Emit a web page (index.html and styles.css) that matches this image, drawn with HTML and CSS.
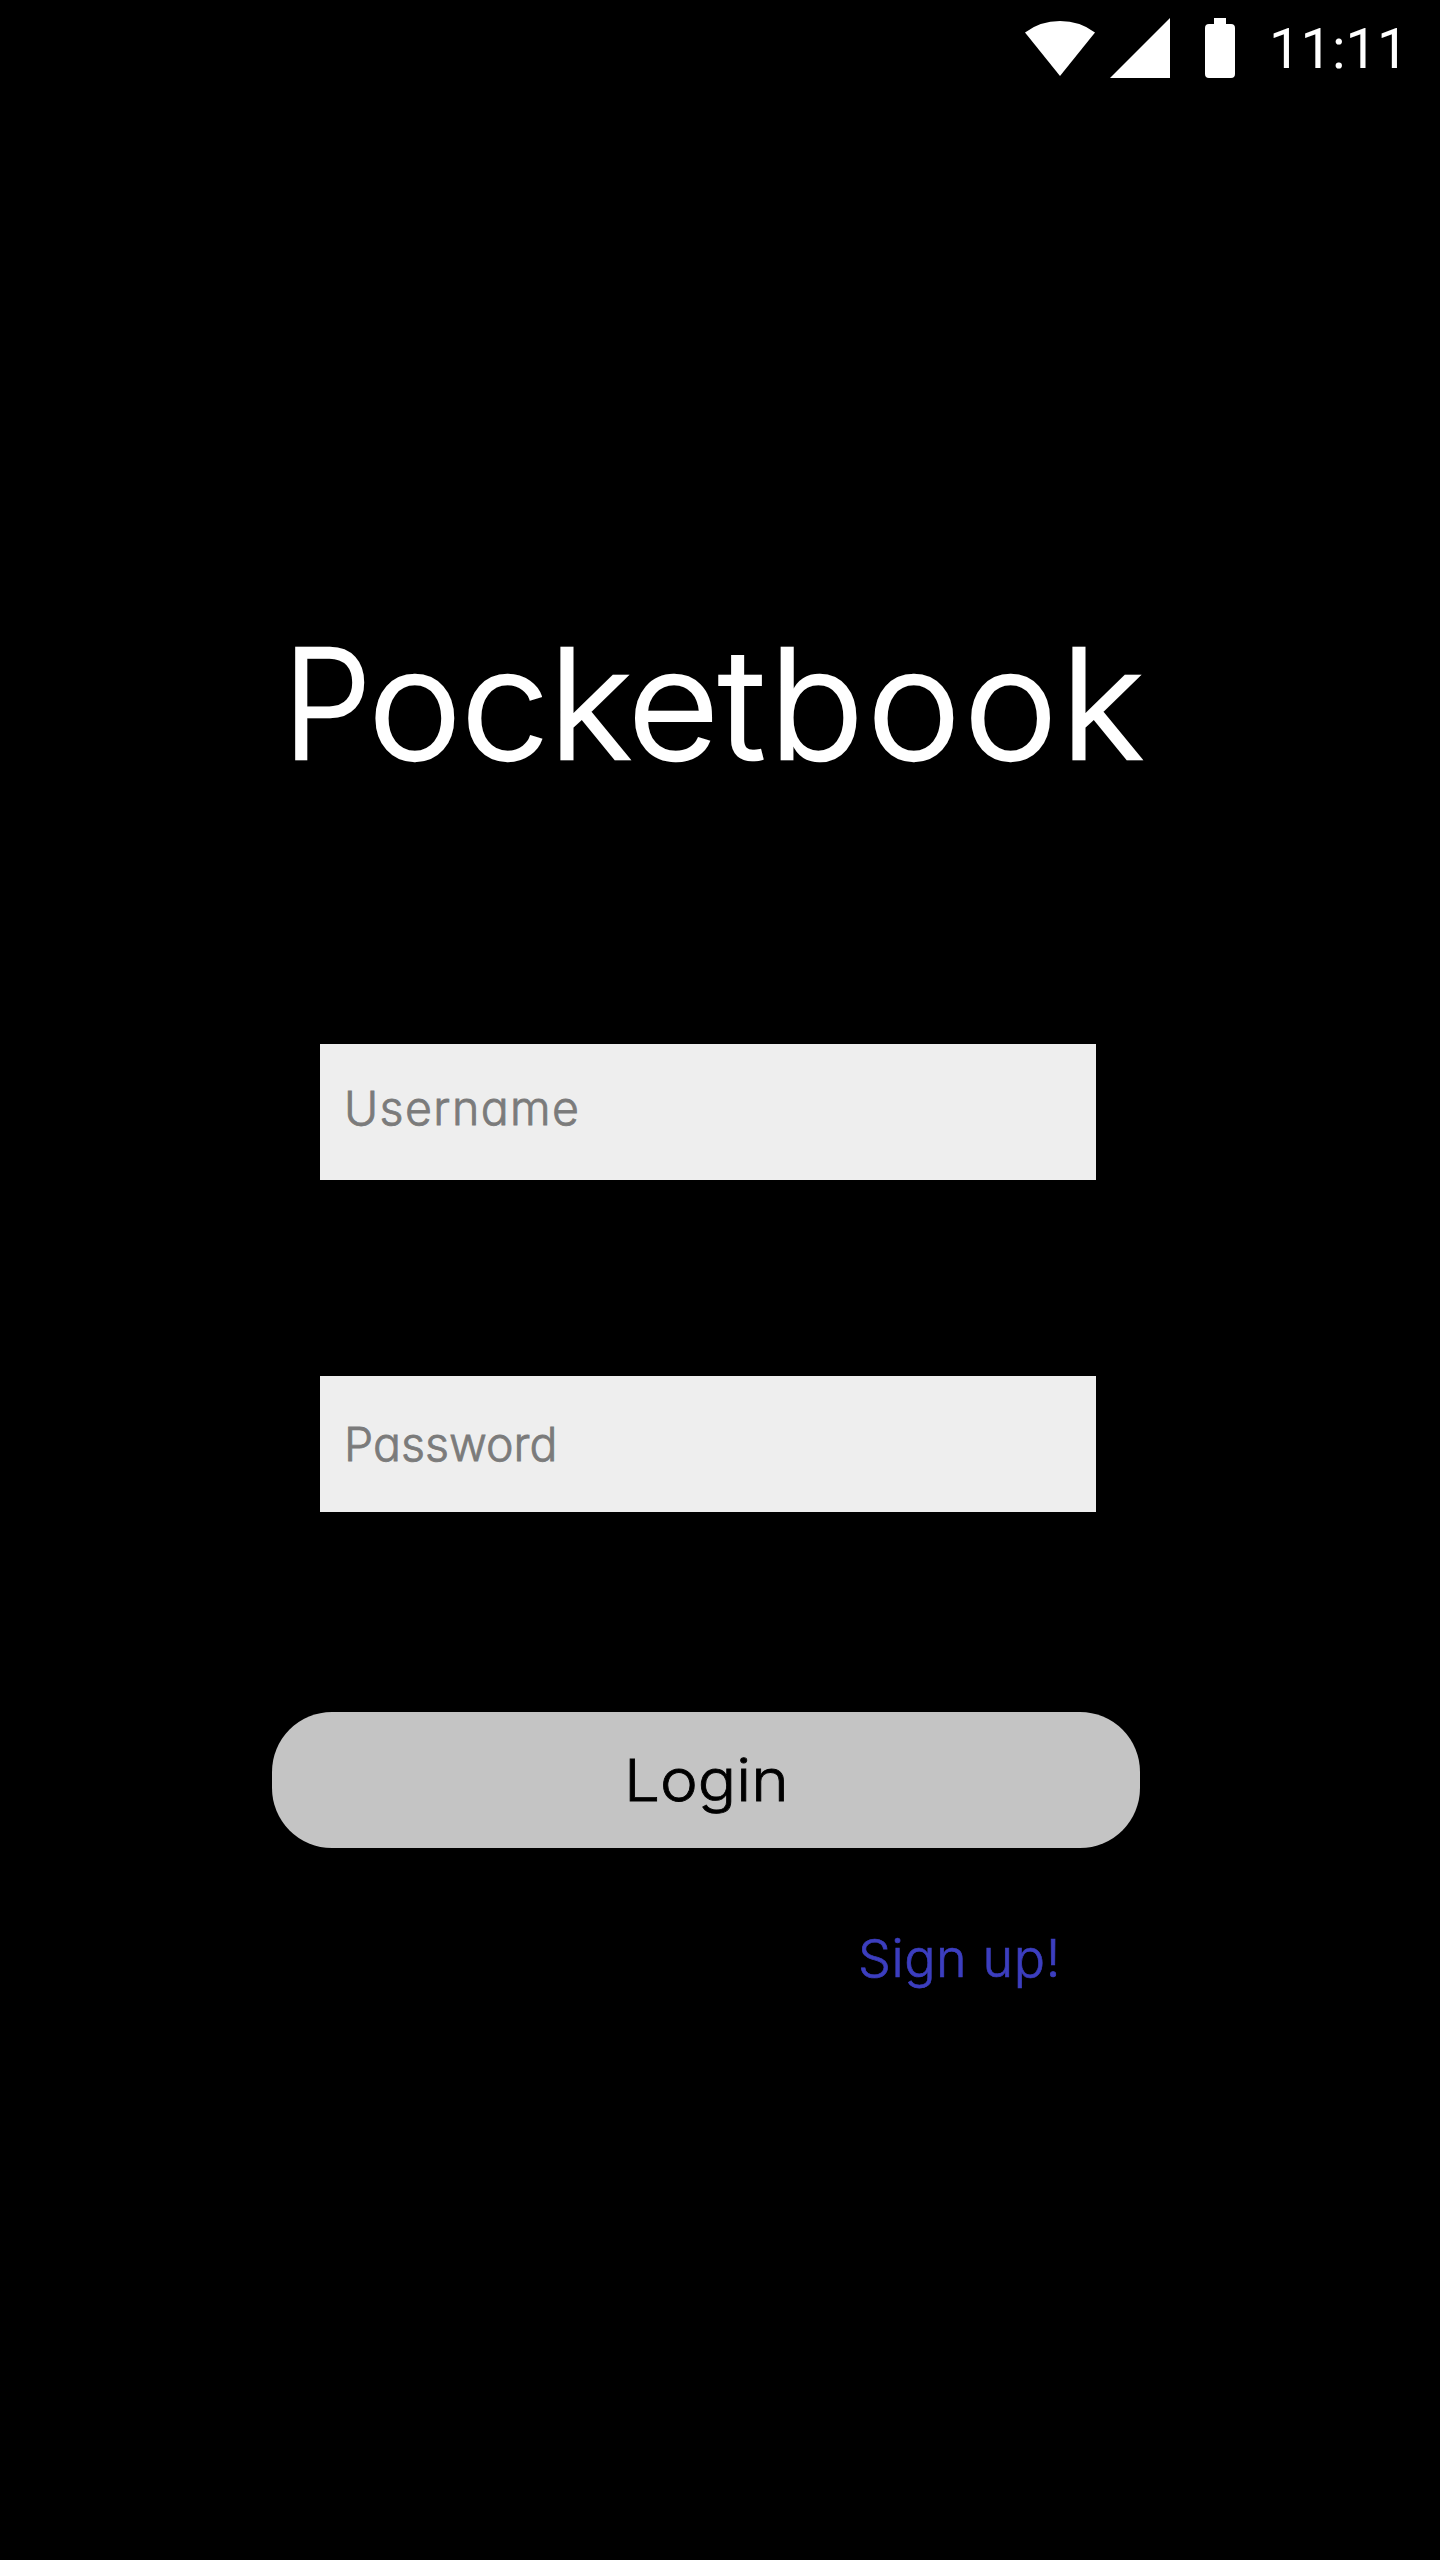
FILE: index.html
```html
<!DOCTYPE html>
<html lang="en">
<head>
<meta charset="utf-8">
<title>Pocketbook</title>
<link rel="stylesheet" href="styles.css">
</head>
<body>
<header class="status">
  <svg class="wifi" viewBox="0 0 70 56" width="70" height="56"><path d="M0 12.5Q15 1 35 1T70 12.5L35 56Z"/></svg>
  <svg class="signal" viewBox="0 0 60 60" width="60" height="60"><path d="M60 0V60H0Z"/></svg>
  <svg class="battery" viewBox="0 0 30 60" width="30" height="60"><path d="M9 0H21V6H26Q30 6 30 10V56Q30 60 26 60H4Q0 60 0 56V10Q0 6 4 6H9Z"/></svg>
  <time class="clock">11:11</time>
</header>
<main class="screen">
  <h1 class="title"><span class="initial">P</span><span class="rest">ocke<span class="loose">tbook</span></span></h1>
  <form class="form">
    <label class="field username">Username</label>
    <label class="field password">Password</label>
    <button class="login" type="button"><span class="wide">Login</span></button>
    <a class="signup">Sign up!</a>
  </form>
</main>
</body>
</html>
```
FILE: styles.css
```css
* { box-sizing: border-box; }
body {
  margin: 0;
  width: 1440px;
  height: 2560px;
  background: #000;
  color: #fff;
  font-family: Inter, sans-serif;
  font-weight: 300;
  font-feature-settings: "cv11";
}
.status {
  display: flex;
  height: 100px;
  padding: 18px 0 0 1025px;
  fill: #fff;
}
.wifi { margin-top: 2px; }
.signal { margin-left: 15px; }
.battery { margin-left: 35px; }
.clock {
  margin-left: 34px;
  font: 400 56px/62px Roboto, sans-serif;
}
.screen { padding: 504px 0 0 272px; }
.title {
  display: flex;
  margin: 0;
  padding-left: 10px;
  height: 200px;
  font-size: 152px;
  line-height: 200px;
  font-weight: 300;
  letter-spacing: -0.8px;
  -webkit-text-stroke: 2.4px #fff;
}
.initial { width: 86px; transform: scaleX(0.93); transform-origin: 12px 50%; }
.rest { transform: scaleX(1.04); transform-origin: 0 50%; }
.loose { letter-spacing: 3px; }
.form { display: flex; flex-direction: column; width: 868px; margin-top: 240px; }
.field {
  width: 776px;
  height: 136px;
  margin-left: 48px;
  padding-left: 24px;
  background: #eee;
  color: #7b7b7b;
  font-size: 46.5px;
  line-height: 128px;
  -webkit-text-stroke: 0.8px #7b7b7b;
}
.username { letter-spacing: 1.4px; }
.password { margin-top: 196px; line-height: 136px; letter-spacing: 0; }
.login {
  height: 136px;
  margin-top: 200px;
  padding: 0 0 0 352px;
  border: 0;
  border-radius: 60px;
  background: #c4c4c4;
  color: #000;
  text-align: left;
  font: inherit;
  font-size: 58px;
  line-height: 132px;
  -webkit-text-stroke: 0.8px #000;
}
.wide { display: inline-block; transform: scaleX(1.1); transform-origin: 0 50%; }
.signup {
  margin: 76px 0 0 586px;
  color: #3c3ebf;
  font-size: 52px;
  line-height: 70px;
  letter-spacing: 0.6px;
  -webkit-text-stroke: 0.7px #3c3ebf;
}
```
